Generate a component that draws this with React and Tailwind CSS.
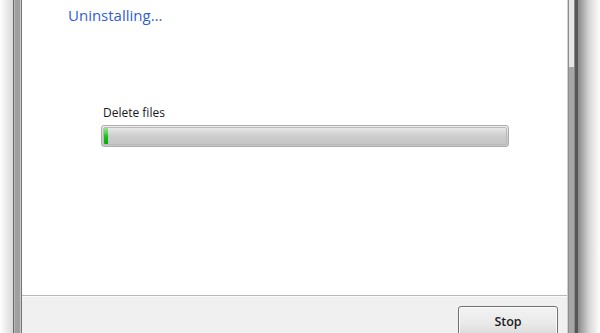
import React from 'react';

const font = { fontFamily: '"Open Sans", "Noto Sans", Arial, sans-serif' };

const ProgressBar = ({ value }) => (
  <div className="relative h-[22px] w-[408px] rounded-[3px] border border-[#adadad] bg-gradient-to-b from-[#f0f0f0] via-[#d0d0d0] to-[#c6c6c6] p-px">
    <div className="h-full rounded-[2px] border border-[#bababa] bg-gradient-to-b from-[#e8e8e8] via-[#cdcdcd] to-[#c6c6c6] overflow-hidden">
      <div
        className="h-full bg-gradient-to-b from-[#8ee88e] via-[#16c316] to-[#0aa80a]"
        style={{ width: `${value}%` }}
      />
    </div>
  </div>
);

const App = () => {
  return (
    <div className="flex h-[333px] w-[600px] overflow-hidden bg-white" style={font}>
      {/* left shadow + frame */}
      <div className="w-[13px] bg-gradient-to-r from-white to-[#d8d8d8]" />
      <div className="flex w-[9px]">
        <div className="w-px bg-[#6a6a6a]" />
        <div className="w-px bg-[#b8b8b8]" />
        <div className="w-[5px] bg-[#a0a0a0]" />
        <div className="w-px bg-[#c8c8c8]" />
        <div className="w-px bg-[#757575]" />
      </div>

      {/* content */}
      <div className="flex w-[545px] flex-col overflow-hidden">
        <div className="h-[295px] shrink-0 bg-white">
          <div className="pl-[46px] pt-[5px] text-[15px] leading-[20px] text-[#2f5fd3]">
            Uninstalling…
          </div>
          <div className="pl-[81px] pt-[80px] text-[12px] leading-[16px] text-[#1a1a1a]">
            Delete files
          </div>
          <div className="pl-[79px] pt-[4px]">
            <ProgressBar value={1} />
          </div>
        </div>
        <div className="h-px shrink-0 bg-[#b9b9b9]" />
        <div className="flex shrink-0 justify-end border-t border-[#fafafa] bg-[#f0f0f0] pr-[9px] pt-[9px]">
          <button className="h-[32px] w-[100px] rounded-[3px] border border-[#707070] bg-gradient-to-b from-[#f2f2f2] via-[#ebebeb] to-[#d8d8d8] text-[12.5px] font-semibold text-[#1e1e1e] shadow-[inset_0_0_0_1px_#fcfcfc]">
            Stop
          </button>
        </div>
      </div>

      {/* right frame + shadow */}
      <div className="flex w-[11px]">
        <div className="w-px bg-[#cfcfcf]" />
        <div className="w-px bg-[#8d8d8d]" />
        <div className="flex w-[5px] flex-col">
          <div className="h-[67px] bg-[#e6e6e6]" />
          <div className="flex-1 bg-[#a6a6a6]" />
        </div>
        <div className="w-px bg-[#8a8a8a]" />
        <div className="w-[3px] bg-[#575757]" />
      </div>
      <div className="flex-1 bg-gradient-to-r from-[#8a8a8a] via-[#d6d6d6] to-white" />
    </div>
  );
};

export default App;
